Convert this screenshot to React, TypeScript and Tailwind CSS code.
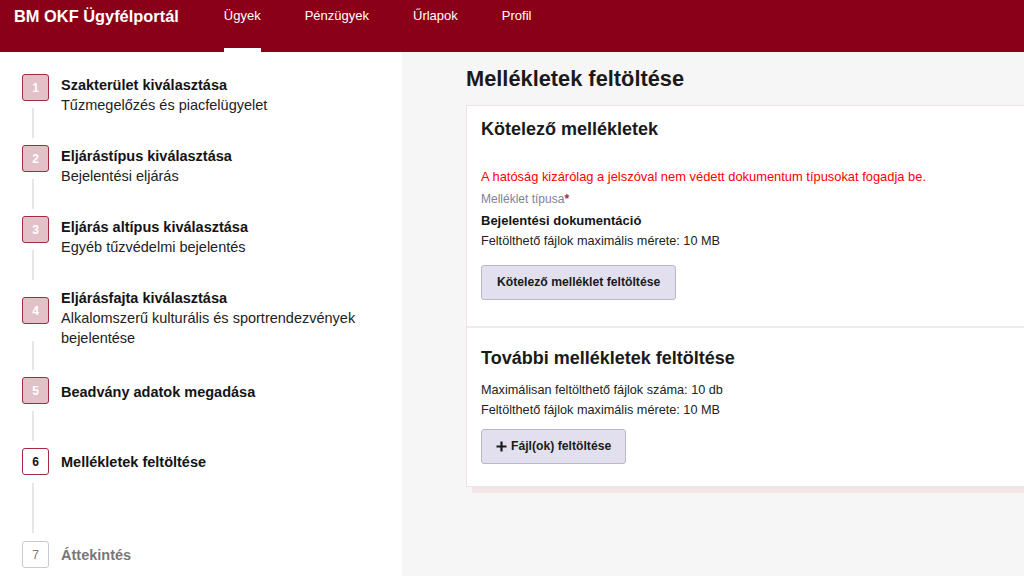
// ======== Sidebar step data
type StepState = "done" | "current" | "todo";

interface Step {
  n: number;
  title: string;
  sub?: string;
  state: StepState;
  boxCls: string;
  lineCls?: string;
  textCls: string;
}

const steps: Step[] = [
  {
    n: 1,
    title: "Szakterület kiválasztása",
    sub: "Tűzmegelőzés és piacfelügyelet",
    state: "done",
    boxCls: "mt-0",
    lineCls: "mt-[7px] mb-[7px] h-[30px]",
    textCls: "mt-[1px]",
  },
  {
    n: 2,
    title: "Eljárástípus kiválasztása",
    sub: "Bejelentési eljárás",
    state: "done",
    boxCls: "mt-0",
    lineCls: "mt-[7px] mb-[7px] h-[30px]",
    textCls: "mt-[1px]",
  },
  {
    n: 3,
    title: "Eljárás altípus kiválasztása",
    sub: "Egyéb tűzvédelmi bejelentés",
    state: "done",
    boxCls: "mt-0",
    lineCls: "mt-[7px] mb-[7px] h-[30px]",
    textCls: "mt-[1px]",
  },
  {
    n: 4,
    title: "Eljárásfajta kiválasztása",
    sub: "Alkalomszerű kulturális és sportrendezvények bejelentése",
    state: "done",
    boxCls: "mt-[10px]",
    lineCls: "mt-[17px] mb-[7px] h-[29px]",
    textCls: "mt-[1px]",
  },
  {
    n: 5,
    title: "Beadvány adatok megadása",
    state: "done",
    boxCls: "mt-0",
    lineCls: "mt-[7px] mb-[7px] h-[30px]",
    textCls: "mt-[5px]",
  },
  {
    n: 6,
    title: "Mellékletek feltöltése",
    state: "current",
    boxCls: "mt-0",
    lineCls: "mt-[8px] mb-[8px] h-[50px]",
    textCls: "mt-[4px]",
  },
  {
    n: 7,
    title: "Áttekintés",
    state: "todo",
    boxCls: "mt-0",
    textCls: "mt-[4px]",
  },
];

const boxStyles: Record<StepState, string> = {
  done: "bg-[#e3c1c8] border-[#a52a3f] text-white font-bold",
  current: "bg-white border-[#a52a3f] text-[#111] font-bold",
  todo: "bg-white border-[#c9c9d3] text-[#777]",
};

function StepRow({ step }: { step: Step }) {
  return (
    <div className="flex gap-[12px]">
      <div className="flex w-[27px] shrink-0 flex-col">
        <div
          className={`${step.boxCls} flex h-[27px] w-[27px] items-center justify-center rounded-[3px] border-[1.5px] text-[12px] ${boxStyles[step.state]}`}
        >
          {step.n}
        </div>
        {step.lineCls && (
          <div className={`${step.lineCls} ml-[10px] w-[2px] bg-[#e6e6e6]`} />
        )}
      </div>
      <div className={`${step.textCls} text-[14.5px] leading-[20px]`}>
        <div
          className={`font-bold ${step.state === "todo" ? "text-[#777]" : "text-[#141414]"}`}
        >
          {step.title}
        </div>
        {step.sub && <div className="text-[#222]">{step.sub}</div>}
      </div>
    </div>
  );
}

// ======== Fejléc
function Header() {
  const nav = ["Ügyek", "Pénzügyek", "Űrlapok", "Profil"];
  return (
    <header className="flex h-[52px] shrink-0 bg-[#8a0019] text-white">
      <div className="pl-[14px] pt-[6px] text-[16.4px] font-bold leading-[20px]">
        BM OKF Ügyfélportál
      </div>
      <nav className="ml-[45px] flex gap-[44px]">
        {nav.map((item, idx) => (
          <div
            key={item}
            className={`flex h-full flex-col pt-[8px] text-[13px] leading-[16px] ${
              idx === 0 ? "border-b-4 border-white" : ""
            }`}
          >
            {item}
          </div>
        ))}
      </nav>
    </header>
  );
}

// ======== Oldal
export default function App() {
  return (
    <div className="flex h-screen flex-col overflow-hidden font-['Liberation_Sans',Arial,sans-serif]">
      <Header />
      <div className="flex min-h-0 flex-1">
        <aside className="w-[402px] shrink-0 bg-white pl-[22px] pr-[20px] pt-[22px]">
          {steps.map((s) => (
            <StepRow key={s.n} step={s} />
          ))}
        </aside>

        <main className="min-w-0 flex-1 overflow-hidden bg-[#f6f6f6] pl-[64px] pt-[14px]">
          <h1 className="text-[21.8px] font-bold leading-[26px] text-[#1a1a1a]">
            Mellékletek feltöltése
          </h1>

          <div className="mt-[13px] w-[640px] border border-[#efe2e4] bg-white shadow-[6px_6px_0_#f2e5e7]">
            <section className="px-[14px] pb-[26px] pt-[11px]">
              <h2 className="text-[18px] font-bold leading-[24px] text-[#1a1a1a]">
                Kötelező mellékletek
              </h2>
              <p className="mt-[27px] text-[12.9px] leading-[18px] text-[#ff0000]">
                A hatóság kizárólag a jelszóval nem védett dokumentum típusokat fogadja be.
              </p>
              <div className="mt-[5px] text-[12px] leading-[16px] text-[#80809a]">
                Melléklet típusa<span className="font-bold text-[#a52a3f]">*</span>
              </div>
              <div className="mt-[5px] text-[13px] font-bold leading-[18px] text-[#141414]">
                Bejelentési dokumentáció
              </div>
              <div className="mt-[2px] text-[12.7px] leading-[18px] text-[#222]">
                Feltölthető fájlok maximális mérete: 10 MB
              </div>
              <button className="mt-[15px] h-[35px] rounded-[3px] border border-[#b9b7cb] bg-[#e2e0ef] px-[15px] text-[12.2px] font-bold text-[#1a1a1a]">
                Kötelező melléklet feltöltése
              </button>
            </section>

            <div className="h-[2px] bg-[#f3e8ea]" />

            <section className="px-[14px] pb-[22px] pt-[18px]">
              <h2 className="text-[18px] font-bold leading-[24px] text-[#1a1a1a]">
                További mellékletek feltöltése
              </h2>
              <div className="mt-[10px] text-[12.7px] leading-[20px] text-[#222]">
                Maximálisan feltölthető fájlok száma: 10 db
              </div>
              <div className="text-[12.7px] leading-[20px] text-[#222]">
                Feltölthető fájlok maximális mérete: 10 MB
              </div>
              <button className="mt-[9px] flex h-[35px] items-center gap-[4px] rounded-[3px] border border-[#b9b7cb] bg-[#e2e0ef] px-[14px] text-[12.2px] font-bold text-[#1a1a1a]">
                <svg width="11" height="11" viewBox="0 0 11 11">
                  <path d="M5.5 0.5v10M0.5 5.5h10" stroke="#1a1a1a" strokeWidth="2.2" />
                </svg>
                Fájl(ok) feltöltése
              </button>
            </section>
          </div>
        </main>
      </div>
    </div>
  );
}
